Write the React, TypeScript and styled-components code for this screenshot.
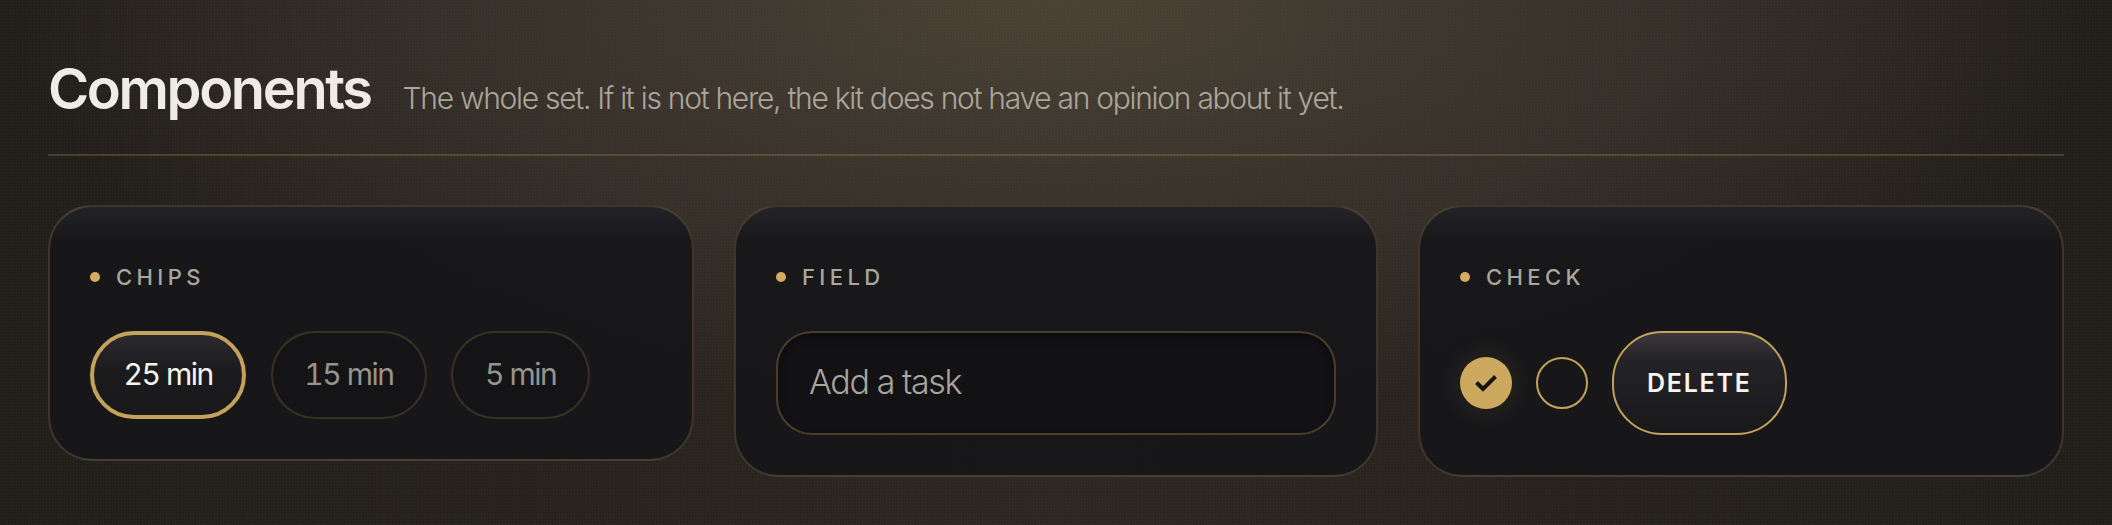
import React from 'react';
import styled, { createGlobalStyle } from 'styled-components';

const GlobalStyle = createGlobalStyle`
  html, body {
    margin: 0;
    padding: 0;
    height: 100%;
    background: #1e1c19;
  }
`;

const Page = styled.div`
  box-sizing: border-box;
  width: 100%;
  height: 525px;
  overflow: hidden;
  padding: 0 48px;
  font-family: Inter, "Liberation Sans", sans-serif;
  background:
    radial-gradient(circle, rgba(201, 165, 92, 0.03) 1px, rgba(201, 165, 92, 0) 1.2px) 0 0 / 3px 3px,
    radial-gradient(ellipse 1050px 420px at 50% 0%, #494135 0%, #38322b 48%, rgba(40, 36, 31, 0) 100%),
    linear-gradient(90deg, #1f1d1a 0%, #2a2620 50%, #1f1d1a 100%);
`;

const Header = styled.header`
  box-sizing: border-box;
  height: 156px;
  display: flex;
  align-items: baseline;
  gap: 32px;
  padding-top: 55px;
  border-bottom: 2px solid rgba(201, 165, 92, 0.24);
`;

const Title = styled.h2`
  margin: 0;
  font-size: 56px;
  line-height: 68px;
  font-weight: 570;
  letter-spacing: -2.4px;
  color: #eeece5;
`;

const Subtitle = styled.p`
  margin: 0;
  font-size: 30px;
  font-weight: 300;
  letter-spacing: -1.28px;
  color: #aaa69b;
`;

const Grid = styled.section`
  display: grid;
  grid-template-columns: 646px 644px 646px;
  gap: 40px;
  align-items: start;
  margin-top: 49px;
`;

const Card = styled.article`
  box-sizing: border-box;
  padding: 54px 40px 40px;
  border: 2px solid rgba(201, 165, 92, 0.22);
  border-radius: 44px;
  background: linear-gradient(180deg, rgba(35, 35, 39, 0.97) 0%, rgba(23, 23, 26, 0.96) 34px, rgba(23, 23, 26, 0.96) 100%);
`;

const Label = styled.div`
  display: flex;
  align-items: center;
  gap: 16px;
  height: 32px;
  margin-bottom: 38px;
  font-size: 22px;
  font-weight: 450;
  letter-spacing: 0.2em;
  color: #a9a69e;
`;

const Dot = styled.span`
  width: 10px;
  height: 10px;
  border-radius: 50%;
  background: #d4ab5f;
`;

const Row = styled.div`
  display: flex;
  align-items: center;
  gap: 24px;
`;

const ChipRow = styled(Row)`
  gap: 24.5px;
`;

const Chip = styled.button<{ $active?: boolean }>`
  box-sizing: border-box;
  height: 88px;
  border-radius: 44px;
  font-family: inherit;
  font-size: 30px;
  font-weight: 400;
  font-variant-numeric: tabular-nums;
  letter-spacing: -1.5px;
  border: ${(p) => (p.$active ? '4px solid #c4a25a' : '2px solid rgba(201, 165, 92, 0.2)')};
  padding: ${(p) => (p.$active ? '0 29.5px 3px' : '0 31.5px 3px')};
  color: ${(p) => (p.$active ? '#f6f4ef' : '#96948c')};
  background: ${(p) =>
    p.$active ? 'linear-gradient(180deg, #2b2b2f 0%, #1b1b1e 45%, #19191c 100%)' : '#141416'};
`;

const Field = styled.div`
  box-sizing: border-box;
  height: 104px;
  display: flex;
  align-items: center;
  padding: 0 31px 3px;
  border: 2px solid rgba(201, 165, 92, 0.3);
  border-radius: 36px;
  background: #121214;
  box-shadow: inset 0 4px 10px rgba(0, 0, 0, 0.4);
  font-size: 34px;
  font-weight: 300;
  letter-spacing: -1.4px;
  color: #a8a59c;
`;

const Check = styled.span<{ $on?: boolean }>`
  box-sizing: border-box;
  flex: none;
  width: 52px;
  height: 52px;
  display: flex;
  align-items: center;
  justify-content: center;
  border-radius: 50%;
  border: ${(p) => (p.$on ? 'none' : '2.5px solid #c4a25a')};
  background: ${(p) => (p.$on ? '#cda95f' : 'transparent')};
  box-shadow: ${(p) => (p.$on ? '0 0 28px rgba(205, 169, 95, 0.14)' : 'none')};
`;

const DeleteButton = styled.button`
  box-sizing: border-box;
  height: 104px;
  padding: 0 33px;
  border: 2px solid #c4a25a;
  border-radius: 50px;
  font-family: inherit;
  font-size: 25px;
  font-weight: 600;
  letter-spacing: 0.07em;
  color: #f6f4ef;
  background: linear-gradient(180deg, #3b393c 0%, #232226 28%, #19191c 100%);
`;

const App: React.FC = () => (
  <Page>
    <GlobalStyle />
    <Header>
      <Title>Components</Title>
      <Subtitle>The whole set. If it is not here, the kit does not have an opinion about it yet.</Subtitle>
    </Header>
    <Grid>
      <Card>
        <Label>
          <Dot />
          CHIPS
        </Label>
        <ChipRow>
          <Chip $active>25 min</Chip>
          <Chip>15 min</Chip>
          <Chip>5 min</Chip>
        </ChipRow>
      </Card>
      <Card>
        <Label>
          <Dot />
          FIELD
        </Label>
        <Field>Add a task</Field>
      </Card>
      <Card>
        <Label>
          <Dot />
          CHECK
        </Label>
        <Row>
          <Check $on>
            <svg width="24" height="18" viewBox="0 0 24 18" fill="none">
              <polyline points="2.5,8.5 9,15 21.5,2.5" stroke="#15140f" strokeWidth="4" />
            </svg>
          </Check>
          <Check />
          <DeleteButton>DELETE</DeleteButton>
        </Row>
      </Card>
    </Grid>
  </Page>
);

export default App;
